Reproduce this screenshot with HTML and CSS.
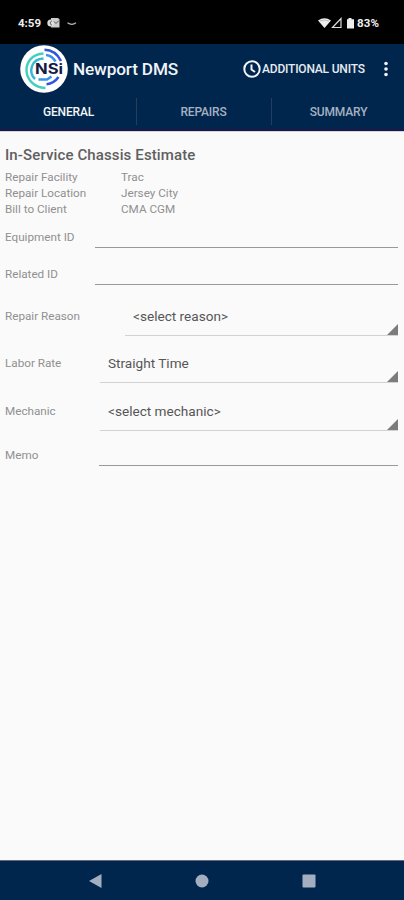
FILE: index.html
```
<!DOCTYPE html>
<html lang="en">
<head>
<meta charset="utf-8">
<title>Newport DMS</title>
<link rel="stylesheet" href="styles.css">
</head>
<body>
<div class="status">
  <span class="time">4:59</span>
  <svg class="notif" width="32" height="12" viewBox="0 0 32 12"><path d="M4 1h7l1.500 1.500v8H4z" fill="#ccc"/><circle cx="3.800" cy="6" r="3.500" fill="#ddd"/><path d="M5 4c-2 0-2.500 4 0 4M7 4.500l2 2 3-3" stroke="#555" fill="none"/><path d="M20.500 5.800q4.500 3.200 8.500 0" fill="none" stroke="#bbb" stroke-width="1.200"/></svg>
  <svg class="signals" width="38" height="13" viewBox="0 0 38 13"><path d="M0 3.500Q6.500-1 13 3.500L6.500 11z" fill="#eee"/><path d="M2 4q4.500-2 9 0" fill="none" stroke="#999" stroke-width=".6"/><path d="M14.500 10.500h8.500v-9z" fill="none" stroke="#ddd" stroke-width="1.200"/><path d="M30.500 1h3v1.200H36V11.500h-7V2.200h1.500z" fill="#eee"/></svg>
  <span class="battery">83%</span>
</div>
<header>
  <div class="appbar">
    <svg class="logo" width="48" height="48" viewBox="0 0 48 48">
      <circle cx="24" cy="24" r="23.800" fill="#fff"/>
      <g fill="none" stroke-width="2.500">
        <path d="M23.500 8.500C0.500 9.500 0.500 41.500 25.500 43" stroke="#45d0bd"/>
        <path d="M23.500 13.500C11 14 8 27 15 34" stroke="#37b9d4"/>
        <path d="M24.500 4.800Q35.500 5 41 16" stroke="#3156dc"/>
        <path d="M26 10Q32 10.500 35.500 16.500" stroke="#3b91e8"/>
        <path d="M26.500 39.200Q34 38.500 38.500 32" stroke="#3156dc"/>
        <path d="M18.500 34.500H27L31.500 31.500" stroke="#3b91e8"/>
      </g>
      <path d="M15 18.500h28v11.500H15z" fill="#fff"/>
      <text x="15" y="29" textLength="28" lengthAdjust="spacingAndGlyphs" class="logotext">NSi</text>
    </svg>
    <h1>Newport DMS</h1>
    <svg class="clock" width="18" height="18" viewBox="0 0 18 18"><circle cx="9" cy="9" r="7.700"/><path d="M8.500 4.500V9.500L12 12"/></svg>
    <span class="units">ADDITIONAL UNITS</span>
    <svg class="more" width="4" height="16" viewBox="0 0 4 16"><circle cx="2" cy="2.500" r="1.800"/><circle cx="2" cy="8" r="1.800"/><circle cx="2" cy="13.500" r="1.800"/></svg>
  </div>
  <nav><div class="tab active"><span>GENERAL</span></div><div class="tab"><span>REPAIRS</span></div><div class="tab"><span>SUMMARY</span></div></nav>
</header>
<main>
  <h2>In-Service Chassis Estimate</h2>
  <dl>
    <dt>Repair Facility</dt><dd>Trac</dd>
    <dt>Repair Location</dt><dd>Jersey City</dd>
    <dt>Bill to Client</dt><dd>CMA CGM</dd>
  </dl>
  <div class="row equipment"><label>Equipment ID</label><div class="input"></div></div>
  <div class="row related"><label>Related ID</label><div class="input"></div></div>
  <div class="row reason"><label>Repair Reason</label><div class="select"><span>&lt;select reason&gt;</span><svg width="11" height="11"><path d="M11 0v11H0z"/></svg></div></div>
  <div class="row labor"><label>Labor Rate</label><div class="select"><span>Straight Time</span><svg width="11" height="11"><path d="M11 0v11H0z"/></svg></div></div>
  <div class="row mechanic"><label>Mechanic</label><div class="select"><span>&lt;select mechanic&gt;</span><svg width="11" height="11"><path d="M11 0v11H0z"/></svg></div></div>
  <div class="row memo"><label>Memo</label><div class="input"></div></div>
</main>
<footer>
  <svg width="14" height="14"><path d="M13.500 0v14L1 7z"/></svg>
  <svg width="14" height="14"><circle cx="7" cy="7" r="6.500"/></svg>
  <svg width="14" height="14"><rect x=".5" y=".5" width="13" height="13" rx="1"/></svg>
</footer>
</body>
</html>
```
FILE: styles.css
```
* { box-sizing: border-box; }
body {
  margin: 0; height: 900px; display: flex; flex-direction: column;
  overflow: hidden; background: #fafafa; color: #909090;
  font-family: Roboto, "Liberation Sans", sans-serif;
}
svg { display: block; flex: none; }
span, label, h1, h2, dt, dd { white-space: nowrap; }
.status {
  height: 44px; background: #000; color: #eee; display: flex; align-items: center;
  padding: 2px 0 0 18px; font-size: 11.500px; font-weight: 700;
}
.time { width: 29px; }
.signals { margin-left: 239px; }
.battery { margin-left: 1px; letter-spacing: .2px; }
header { height: 87px; background: #00264d; border-bottom: 2px solid #1b1748; }
.appbar { height: 49px; display: flex; align-items: center; padding-left: 20px; }
.logotext { font: 700 14px Inter, sans-serif; fill: #161b45; }
h1 { margin: 1px 0 0 5px; width: 170px; font-size: 17.200px; letter-spacing: -.15px; font-weight: 500; line-height: 24px; color: #f0f3f7; }
.clock { fill: none; stroke: #f0f3f7; stroke-width: 2; }
.units { width: 120px; margin-left: 1px; font-size: 12px; letter-spacing: -.2px; font-weight: 500; color: #e7ebf1; }
.more { margin-left: 2px; fill: #f0f3f7; }
nav { display: flex; height: 36px; margin: 0 -2px 0 1px; }
.tab {
  flex: 1; display: flex; align-items: center; justify-content: center;
  padding-top: 2px; font-size: 12px; letter-spacing: -.15px; font-weight: 500; color: #a5b1c2;
  background: linear-gradient(#243e60, #243e60) no-repeat 0 5px / 1px 27px;
}
.tab.active { color: #f4f6f8; background: none; }
main { flex: 1; padding: 14px 6px 0 5px; font-size: 11.700px; box-shadow: inset 0 1px #d8d3e0; }
h2 { margin: 0; font-size: 15px; letter-spacing: .12px; line-height: 20px; font-weight: 500; color: #606060; }
dl { margin: 4px 0 0; display: grid; grid-template-columns: 116px 1fr; line-height: 16px; }
dd { margin: 0; }
.row { display: flex; line-height: 16px; }
label { width: 90px; flex: none; }
.input { flex: 1; border-bottom: 1px solid #999; }
.equipment { height: 19px; margin-top: 12px; }
.related { height: 19px; margin-top: 18px; }
.select {
  flex: 1; display: flex; justify-content: space-between;
  padding-left: 8px; border-bottom: 1px solid #d2d2d2; color: #565656; font-size: 13.600px;
}
.select svg { fill: #7c7c7c; align-self: flex-end; }
.reason { height: 28px; margin-top: 23px; }
.reason label { width: 120px; }
.labor { height: 28px; margin-top: 19px; }
.mechanic { height: 28px; margin-top: 20px; }
.memo { height: 19px; margin-top: 16px; }
.labor label, .mechanic label { width: 95px; }
.memo label { width: 94px; }
footer {
  height: 40px; background: #00264d; border-top: 1px solid #666985;
  display: flex; justify-content: center; align-items: center; gap: 93px; fill: #a3afc1;
}
```
